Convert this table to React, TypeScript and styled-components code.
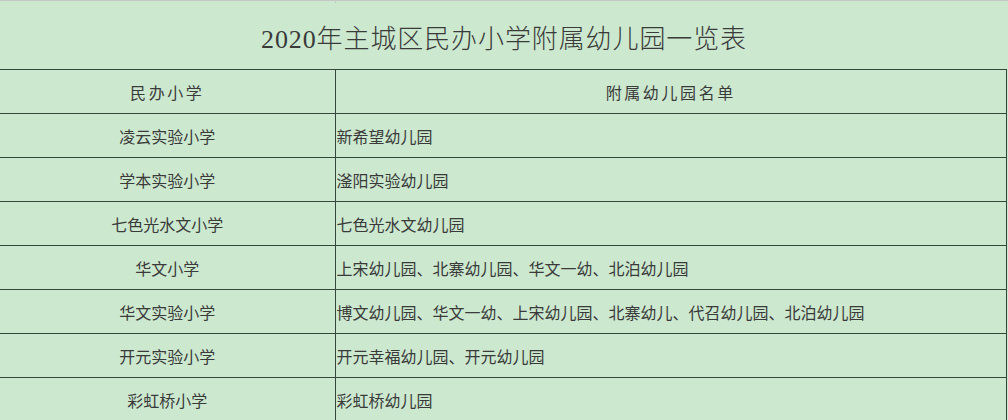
import { FC } from "react";
import styled, { createGlobalStyle } from "styled-components";

const GlobalStyle = createGlobalStyle`
  html, body {
    margin: 0;
    padding: 0;
    background-color: #cce8cf;
  }
  body {
    font-family: "Noto Sans CJK SC", "Noto Sans", sans-serif;
    color: #333;
  }
`;

const Sheet = styled.div`
  width: 1008px;
  height: 420px;
  overflow: hidden;
  background-color: #cce8cf;
`;

const TopEdge = styled.div`
  display: grid;
  grid-template-columns: 335px 1fr;
  height: 2px;
  border-top: 1px solid #c4c8c4;

  span + span {
    border-left: 1px solid #c4c8c4;
  }
`;

const Title = styled.div`
  height: 66px;
  display: flex;
  align-items: center;
  justify-content: center;
  font-family: "Liberation Serif", "Noto Sans CJK SC", serif;
  font-size: 26px;
  font-weight: 300;
  letter-spacing: 0.9px;
  color: #3a3a3a;
`;

const Table = styled.table`
  width: 1007px;
  border-collapse: collapse;
  table-layout: fixed;
  font-size: 16px;
  color: #3a3a3a;
`;

const Row = styled.tr`
  height: 44px;
`;

const Cell = styled.td<{ $align?: "left" | "center"; $head?: boolean }>`
  border: 1px solid #34483a;
  padding: 0 0 0 ${(p) => (p.$align === "left" ? "1px" : "0")};
  text-align: ${(p) => p.$align ?? "center"};
  letter-spacing: ${(p) => (p.$head ? "2.6px" : "0")};
  white-space: nowrap;
  line-height: 20px;

  &:first-child {
    border-left: none;
  }
`;

const schools: Array<[string, string]> = [
  ["凌云实验小学", "新希望幼儿园"],
  ["学本实验小学", "滏阳实验幼儿园"],
  ["七色光水文小学", "七色光水文幼儿园"],
  ["华文小学", "上宋幼儿园、北寨幼儿园、华文一幼、北泊幼儿园"],
  ["华文实验小学", "博文幼儿园、华文一幼、上宋幼儿园、北寨幼儿、代召幼儿园、北泊幼儿园"],
  ["开元实验小学", "开元幸福幼儿园、开元幼儿园"],
  ["彩虹桥小学", "彩虹桥幼儿园"],
];

const App: FC = () => {
  return (
    <Sheet>
      <GlobalStyle />
      <TopEdge>
        <span />
        <span />
      </TopEdge>
      <Title>2020年主城区民办小学附属幼儿园一览表</Title>
      <Table>
        <colgroup>
          <col style={{ width: 335 }} />
          <col />
        </colgroup>
        <tbody>
          <Row>
            <Cell $head>民办小学</Cell>
            <Cell $head>附属幼儿园名单</Cell>
          </Row>
          {schools.map(([school, kindergartens]) => (
            <Row key={school}>
              <Cell>{school}</Cell>
              <Cell $align="left">{kindergartens}</Cell>
            </Row>
          ))}
        </tbody>
      </Table>
    </Sheet>
  );
};

export default App;
